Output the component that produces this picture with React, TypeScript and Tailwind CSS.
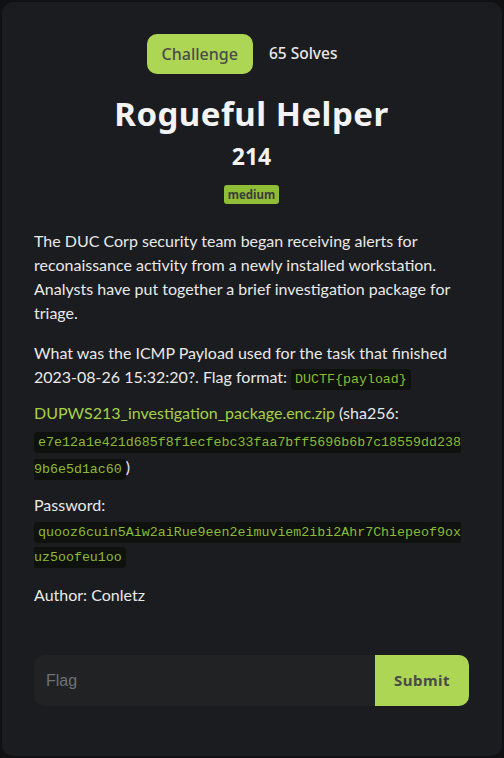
export default function App() {
  const mono = "font-['Liberation_Mono','DejaVu_Sans_Mono',monospace]"
  const code = `${mono} rounded-[4px] bg-[#0f110e] px-[4px] py-[3px] text-[13.3px] leading-[16px] text-[#8bbb35]`
  return (
    <div className="min-h-[758px] bg-[#111113] p-[2px] font-['Lato',sans-serif]">
      <div className="h-[754px] rounded-[12px] bg-[#1b1c1f] pl-[32px] pr-[33px] pt-[32px]">
        {/* header */}
        <div className="flex items-center justify-center gap-4 pr-[19px]">
          <span className="flex h-[40px] items-center rounded-[10px] bg-[#acd653] px-[15px] font-['Noto_Sans',sans-serif] text-[16px] font-medium text-[#4b4b4b]">
            Challenge
          </span>
          <span className="font-['Noto_Sans',sans-serif] text-[15.5px] font-medium text-[#e8e8e8]">65 Solves</span>
        </div>
        <h1 className="mt-[18px] text-center font-['Noto_Sans',sans-serif] text-[33px] font-bold leading-[44px] tracking-[0.5px] text-[#f3f3f3]">
          Rogueful Helper
        </h1>
        <div className="mt-[6px] text-center font-['Noto_Sans',sans-serif] text-[23px] font-bold leading-[28px] text-[#f3f3f3]">214</div>
        <div className="mt-[15px] flex justify-center">
          <span className="rounded-[3px] bg-[#8fbe36] px-[4px] font-['Noto_Sans',sans-serif] text-[11.5px] font-bold leading-[19px] text-[#3b3b3b]">
            medium
          </span>
        </div>

        {/* description */}
        <div className="mt-[25px] pr-[2px] text-[16px] leading-[24px] text-[#e9e9e9]">
          <p>
            The DUC Corp security team began receiving alerts for reconaissance activity from a newly installed workstation.
            Analysts have put together a brief investigation package for triage.
          </p>
          <p className="mt-[16px]">
            What was the ICMP Payload used for the task that finished 2023-08-26 15:32:20?. Flag format:{' '}
            <code className={code}>DUCTF{'{payload}'}</code>
          </p>
          <p className="mt-[10px] leading-[27px] [overflow-wrap:break-word]">
            <a className="text-[#a6d147]">DUPWS213_investigation_package.enc.zip</a> (sha256:{' '}
            <code className={code}>e7e12a1e421d685f8f1ecfebc33faa7bff5696b6b7c18559dd2389b6e5d1ac60</code>)
          </p>
          <p className="mt-[12px] leading-[25px] [overflow-wrap:break-word]">
            Password:{' '}
            <code className={code}>quooz6cuin5Aiw2aiRue9een2eimuviem2ibi2Ahr7Chiepeof9oxuz5oofeu1oo</code>
          </p>
          <p className="mt-[16px]">Author: Conletz</p>
        </div>

        {/* flag form */}
        <div className="mt-[48px] flex h-[51px] overflow-hidden rounded-[10px]">
          <input
            className="min-w-0 flex-1 bg-[#212224] px-[12px] font-['Liberation_Sans',sans-serif] text-[16px] text-white placeholder-[#6f7176] outline-none"
            placeholder="Flag"
          />
          <button className="w-[94px] bg-[#acd653] font-['Noto_Sans',sans-serif] text-[15px] font-bold tracking-[0.5px] text-[#4a4a4a]">
            Submit
          </button>
        </div>
      </div>
    </div>
  )
}
